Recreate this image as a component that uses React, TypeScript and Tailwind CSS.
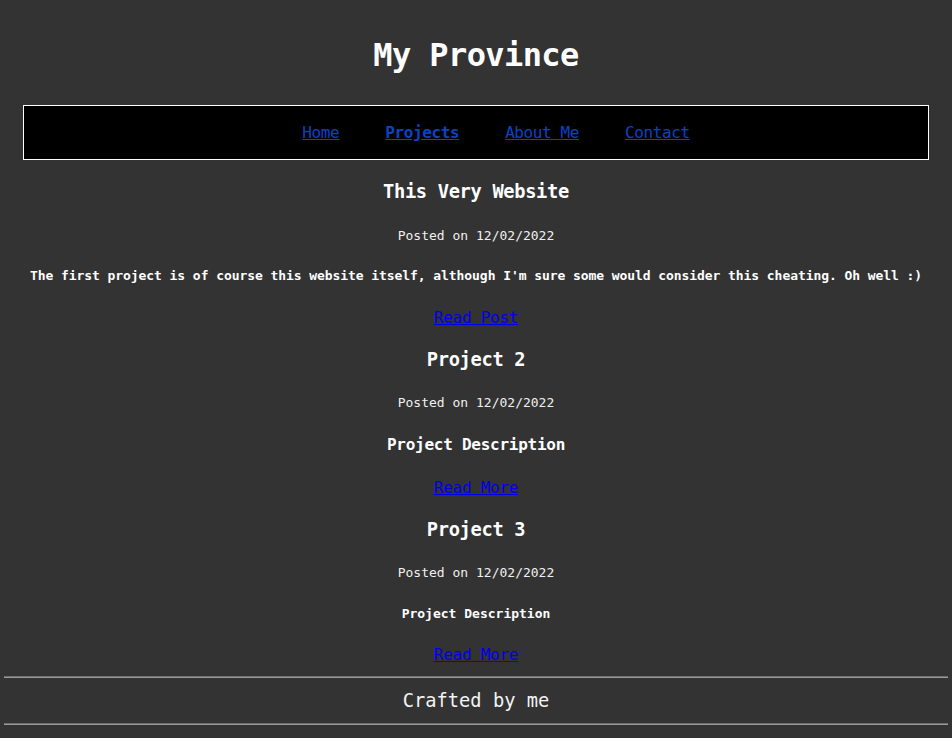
const mono = "font-['DejaVu_Sans_Mono',monospace]";

type Project = {
  title: string;
  date: string;
  desc: string;
  descClass: string;
  link: string;
  heights: [string, string, string, string];
};

const projects: Project[] = [
  {
    title: "This Very Website",
    date: "12/02/2022",
    desc: "The first project is of course this website itself, although I'm sure some would consider this cheating. Oh well :)",
    descClass: "text-[13px] font-bold tracking-[-0.07px]",
    link: "Read Post",
    heights: ["h-[63px] leading-[63px]", "h-[26px] leading-[26px]", "h-[54px] leading-[54px]", "h-[30px] leading-[30px]"],
  },
  {
    title: "Project 2",
    date: "12/02/2022",
    desc: "Project Description",
    descClass: "text-[16px] font-bold tracking-[-0.26px]",
    link: "Read More",
    heights: ["h-[54px] leading-[54px]", "h-[32px] leading-[32px]", "h-[52px] leading-[52px]", "h-[34px] leading-[34px]"],
  },
  {
    title: "Project 3",
    date: "12/02/2022",
    desc: "Project Description",
    descClass: "text-[13px] font-bold",
    link: "Read More",
    heights: ["h-[50px] leading-[50px]", "h-[36px] leading-[36px]", "h-[46px] leading-[46px]", "h-[36px] leading-[36px]"],
  },
];

const navLinks = ["Home", "Projects", "About Me", "Contact"];

function ProjectPost({ p }: { p: Project }) {
  return (
    <div className="flex flex-col items-center text-center">
      <h3 className={`${p.heights[0]} text-[18.72px] font-bold tracking-[-0.33px] text-white`}>{p.title}</h3>
      <p className={`${p.heights[1]} text-[13px] text-[#f0f0f0]`}>Posted on {p.date}</p>
      <p className={`${p.heights[2]} ${p.descClass} text-white`}>{p.desc}</p>
      <div className={p.heights[3]}>
        <a href="#" className="text-[16px] tracking-[-0.25px] text-[#0000ee] underline">
          {p.link}
        </a>
      </div>
    </div>
  );
}

export default function App() {
  return (
    <div className={`${mono} min-h-[738px] bg-[#333333] text-white`}>
      <h1 className="pt-[15px] h-[95px] leading-[80px] text-center text-[32px] font-bold tracking-[-0.6px]">
        My Province
      </h1>
      <nav className="mx-[23px] mt-[10px] h-[55px] border border-white bg-black">
        <ul className="h-full pl-[40px] flex items-center justify-center gap-[46px]">
          {navLinks.map((l) => (
            <li key={l}>
              <a
                href="#"
                className={`text-[16px] tracking-[-0.4px] text-[#0a44c4] underline ${l === "Projects" ? "font-bold" : ""}`}
              >
                {l}
              </a>
            </li>
          ))}
        </ul>
      </nav>
      {projects.map((p) => (
        <ProjectPost key={p.title} p={p} />
      ))}
      <footer className="mt-[3px] mx-1">
        <div className="border-t border-b border-t-[#6e6e6e] border-b-[#9a9a9a]" />
        <p className="h-[45px] leading-[45px] text-center text-[18.72px] text-[#f4f4f4]">Crafted by me</p>
        <div className="border-t border-b border-t-[#6e6e6e] border-b-[#9a9a9a]" />
      </footer>
    </div>
  );
}
